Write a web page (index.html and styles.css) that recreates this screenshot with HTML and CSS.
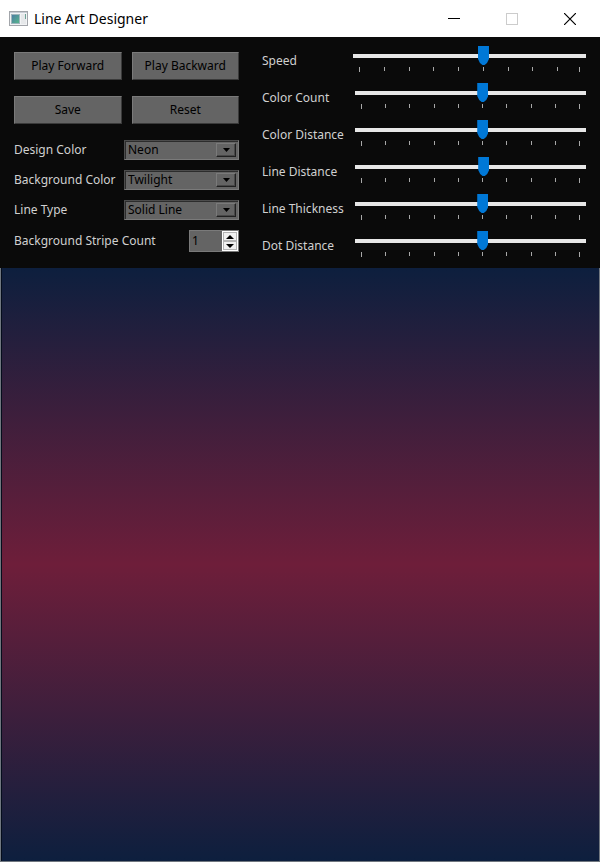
FILE: index.html
```html
<!DOCTYPE html>
<html lang="en">
<head>
<meta charset="utf-8">
<title>Line Art Designer</title>
<link rel="stylesheet" href="styles.css">
</head>
<body>
<header class="titlebar">
  <svg class="app-icon" width="19" height="16" viewBox="0 0 19 16" aria-hidden="true">
    <defs><linearGradient id="pane" x1="0" y1="0" x2="1" y2="1"><stop offset="0" stop-color="#4d7fa3"/><stop offset="1" stop-color="#56b48c"/></linearGradient></defs>
    <rect x="0.5" y="0.5" width="18" height="14" fill="#f2f3f5" stroke="#a2a5aa"/>
    <rect x="1" y="1" width="17" height="1" fill="#c9ced6"/>
    <rect x="2" y="3" width="9" height="10" fill="#9fb6bd"/>
    <rect x="3" y="4" width="7" height="8" fill="url(#pane)"/>
    <rect x="12" y="3" width="5" height="10" fill="#e6e8ea"/>
    <rect x="16" y="3" width="1" height="5" fill="#6da296"/>
  </svg>
  <h1 class="title">Line Art Designer</h1>
  <div class="window-controls">
    <button class="window-button" type="button" aria-label="Minimize"><svg width="12" height="12"><path d="M0 5.5H12" stroke="#000"/></svg></button>
    <button class="window-button" type="button" aria-label="Maximize" disabled><svg width="12" height="12"><rect x=".5" y=".5" width="11" height="11" fill="none" stroke="#ccc"/></svg></button>
    <button class="window-button" type="button" aria-label="Close"><svg width="12" height="12"><path d="M0 0L12 12M12 0L0 12" stroke="#000" stroke-width="1.2"/></svg></button>
  </div>
</header>

<main class="app">
  <div class="panel">
    <section class="settings">
      <div class="actions">
        <button class="button" type="button">Play Forward</button>
        <button class="button" type="button">Play Backward</button>
        <button class="button" type="button">Save</button>
        <button class="button" type="button">Reset</button>
      </div>
      <div class="fields">
        <div class="field">
          <label for="design">Design Color</label>
          <div class="combo"><select id="design"><option>Neon</option></select><span class="combo-arrow"><svg width="7" height="4"><path d="M0 0H7L3.500 4Z"/></svg></span></div>
        </div>
        <div class="field">
          <label for="background">Background Color</label>
          <div class="combo"><select id="background"><option>Twilight</option></select><span class="combo-arrow"><svg width="7" height="4"><path d="M0 0H7L3.500 4Z"/></svg></span></div>
        </div>
        <div class="field">
          <label for="line">Line Type</label>
          <div class="combo"><select id="line"><option>Solid Line</option></select><span class="combo-arrow"><svg width="7" height="4"><path d="M0 0H7L3.500 4Z"/></svg></span></div>
        </div>
        <div class="field">
          <label for="stripes">Background Stripe Count</label>
          <div class="spin">
            <input id="stripes" type="number" value="1" min="1">
            <div class="spin-buttons">
              <button type="button" aria-label="Increase"><svg width="8" height="4"><path d="M0 4H8L4 0Z"/></svg></button>
              <button type="button" aria-label="Decrease"><svg width="8" height="4"><path d="M0 0H8L4 4Z"/></svg></button>
            </div>
          </div>
        </div>
      </div>
    </section>

    <section class="sliders">
      <div class="slider-row slider-row-speed">
        <label for="speed">Speed</label>
        <div class="slider"><input id="speed" type="range" min="0" max="100" step="any" value="56.3"><div class="ticks"><i></i><i></i><i></i><i></i><i></i><i></i><i></i><i></i><i></i></div></div>
      </div>
      <div class="slider-row">
        <label for="color-count">Color Count</label>
        <div class="slider"><input id="color-count" type="range" min="0" max="9" value="5"><div class="ticks"><i></i><i></i><i></i><i></i><i></i><i></i><i></i><i></i><i></i></div></div>
      </div>
      <div class="slider-row">
        <label for="color-distance">Color Distance</label>
        <div class="slider"><input id="color-distance" type="range" min="0" max="9" value="5"><div class="ticks"><i></i><i></i><i></i><i></i><i></i><i></i><i></i><i></i><i></i></div></div>
      </div>
      <div class="slider-row">
        <label for="line-distance">Line Distance</label>
        <div class="slider"><input id="line-distance" type="range" min="0" max="100" step="any" value="56"><div class="ticks"><i></i><i></i><i></i><i></i><i></i><i></i><i></i><i></i><i></i></div></div>
      </div>
      <div class="slider-row">
        <label for="thickness">Line Thickness</label>
        <div class="slider"><input id="thickness" type="range" min="0" max="9" value="5"><div class="ticks"><i></i><i></i><i></i><i></i><i></i><i></i><i></i><i></i><i></i></div></div>
      </div>
      <div class="slider-row">
        <label for="dot-distance">Dot Distance</label>
        <div class="slider"><input id="dot-distance" type="range" min="0" max="9" value="5"><div class="ticks"><i></i><i></i><i></i><i></i><i></i><i></i><i></i><i></i><i></i></div></div>
      </div>
    </section>
  </div>
  <div class="canvas"></div>
</main>
</body>
</html>
```
FILE: styles.css
```css
* { box-sizing: border-box; }

body {
  margin: 0;
  min-height: 100vh;
  display: flex;
  flex-direction: column;
  background: #0a0a0a;
  color: #d0d0d0;
  font: 12px/16px "Noto Sans", "Open Sans", sans-serif;
}

button, input, select { font: inherit; margin: 0; border-radius: 0; }
svg { display: block; }

.titlebar {
  display: flex;
  align-items: center;
  height: 37px;
  padding: 0 1px 0 9px;
  background: #fff;
  color: #000;
}

.title {
  margin: 0 0 0 6px;
  font-size: 14px;
  font-weight: 400;
  line-height: 20px;
}

.window-controls { display: flex; align-self: stretch; margin-left: auto; }

.window-button {
  display: grid;
  place-items: center;
  width: 58px;
  padding: 0;
  border: 0;
  background: none;
}

.app { flex: 1; display: flex; flex-direction: column; }

.panel {
  display: grid;
  grid-template-columns: 225fr 324fr;
  column-gap: 23px;
  padding: 0 14px;
}

.settings { padding: 15px 0 16px; }

.actions {
  display: grid;
  grid-template-columns: 1fr 1fr;
  gap: 16px 10px;
}

.button {
  height: 28px;
  padding: 0;
  border: 1px solid;
  border-color: #7a7a7a #3a3a3a #3a3a3a #7a7a7a;
  background: #646464;
  color: #000;
}

.fields { display: grid; gap: 10px; margin-top: 16px; }

.field { display: flex; align-items: center; justify-content: space-between; }

.field label, .slider-row label { white-space: nowrap; }

.combo { position: relative; width: 115px; height: 20px; }

.combo select {
  display: block;
  width: 100%;
  height: 100%;
  padding: 0 24px 0 3px;
  appearance: none;
  border: 1px solid;
  border-color: #4c4c4c #7a7a7a #7a7a7a #4c4c4c;
  box-shadow: inset 1px 1px #2c2c2c;
  background: #646464;
  color: #000;
  line-height: 18px;
}

.combo-arrow {
  position: absolute;
  top: 3px;
  right: 3px;
  display: grid;
  place-items: center;
  width: 20px;
  height: 14px;
  border: 1px solid;
  border-color: #7a7a7a #202020 #202020 #7a7a7a;
  box-shadow: inset -1px -1px #484848;
  pointer-events: none;
}

.spin {
  display: flex;
  width: 50px;
  height: 22px;
  border: 1px solid #7a7a7a;
  background: #646464;
}

.spin input {
  flex: 1;
  min-width: 0;
  padding: 0 2px;
  appearance: textfield;
  border: 0;
  background: none;
  color: #000;
}

.spin input::-webkit-inner-spin-button { appearance: none; margin: 0; }

.spin-buttons {
  display: grid;
  grid-template-rows: 1fr 1fr;
  width: 16px;
  padding: 1px;
  background: #fff;
}

.spin-buttons button {
  display: grid;
  place-items: center;
  padding: 0;
  border: 1px solid #b4b4b4;
  background: #f0f0f0;
}

.sliders { display: grid; grid-auto-rows: 37px; padding-top: 9px; }

.slider-row {
  display: grid;
  grid-template-columns: 93px 1fr;
  align-items: start;
}

.slider-row-speed { grid-template-columns: 91px 1fr; }

.slider-row label { padding-top: 7px; }

.slider input {
  display: block;
  width: 100%;
  height: 19px;
  appearance: none;
  background: linear-gradient(#e7e7e7, #e7e7e7) center 8px / 100% 4px no-repeat;
}

.slider input::-webkit-slider-thumb {
  appearance: none;
  width: 11px;
  height: 19px;
  background: #0078d7;
  clip-path: polygon(0 0, 100% 0, 100% 68%, 82% 90%, 60% 100%, 40% 100%, 18% 90%, 0 68%);
}

.ticks { display: flex; margin: 2px 6px 0; height: 5px; border-right: 1px solid #a8a8a8; }

.ticks i { flex: 1; height: 4px; border-left: 1px solid #a8a8a8; }

.ticks i:first-child { height: 5px; }

.slider-row-speed .ticks i:last-child { flex-grow: 0.88; }

.canvas {
  flex: 1;
  border: solid #70777f;
  border-width: 0 1px 1px;
  box-shadow: inset 1px 0 #050d1c;
  background: linear-gradient(#0d1f3e, #6e1e3a 50%, #0d1f3e);
}
```
